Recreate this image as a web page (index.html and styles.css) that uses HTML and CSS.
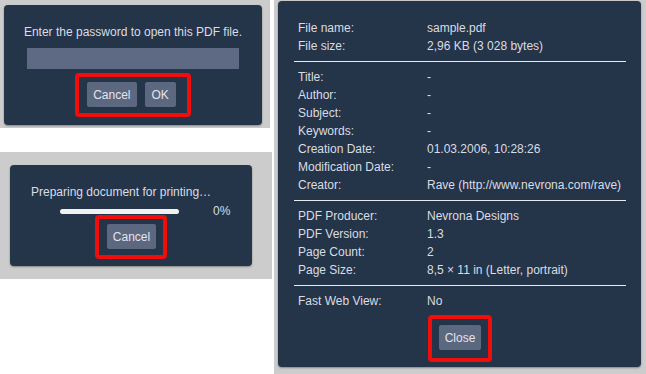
FILE: index.html
```html
<!DOCTYPE html>
<html lang="en">
<head>
  <meta charset="UTF-8" />
  <title>PDF dialogs</title>
  <meta name="viewport" content="width=device-width, initial-scale=1.0" />
  <link rel="stylesheet" href="styles.css">
</head>
<body>

  <div class="sheet">

    <!-- Left column: password + print dialogs -->
    <div class="left-col">

      <div class="backdrop password-backdrop">
        <div class="dialog password-dialog">
          <p class="dialog-text">Enter the password to open this PDF file.</p>
          <div class="password-input"></div>
          <div class="highlight password-buttons">
            <button>Cancel</button>
            <button>OK</button>
          </div>
        </div>
      </div>

      <div class="backdrop print-backdrop">
        <div class="dialog print-dialog">
          <p class="print-text">Preparing document for printing…</p>
          <div class="progress-row">
            <div class="progress-bar"></div>
            <span class="progress-value">0%</span>
          </div>
          <div class="highlight print-buttons">
            <button>Cancel</button>
          </div>
        </div>
      </div>

    </div>

    <!-- Right column: document properties -->
    <div class="backdrop props-backdrop">
      <div class="dialog props-dialog">

        <div class="props-section">
          <div class="row"><span class="label">File name:</span><span>sample.pdf</span></div>
          <div class="row"><span class="label">File size:</span><span>2,96 KB (3 028 bytes)</span></div>
        </div>
        <hr>
        <div class="props-section">
          <div class="row"><span class="label">Title:</span><span>-</span></div>
          <div class="row"><span class="label">Author:</span><span>-</span></div>
          <div class="row"><span class="label">Subject:</span><span>-</span></div>
          <div class="row"><span class="label">Keywords:</span><span>-</span></div>
          <div class="row"><span class="label">Creation Date:</span><span>01.03.2006, 10:28:26</span></div>
          <div class="row"><span class="label">Modification Date:</span><span>-</span></div>
          <div class="row"><span class="label">Creator:</span><span>Rave (http://www.nevrona.com/rave)</span></div>
        </div>
        <hr>
        <div class="props-section">
          <div class="row"><span class="label">PDF Producer:</span><span>Nevrona Designs</span></div>
          <div class="row"><span class="label">PDF Version:</span><span>1.3</span></div>
          <div class="row"><span class="label">Page Count:</span><span>2</span></div>
          <div class="row"><span class="label">Page Size:</span><span>8,5 × 11 in (Letter, portrait)</span></div>
        </div>
        <hr>
        <div class="props-section">
          <div class="row"><span class="label">Fast Web View:</span><span>No</span></div>
        </div>

        <div class="highlight close-buttons">
          <button>Close</button>
        </div>

      </div>
    </div>

  </div>

</body>
</html>
```

FILE: styles.css
```css
/* Basic reset */
* {
  box-sizing: border-box;
  margin: 0;
  padding: 0;
}
body {
  font-family: 'Liberation Sans', Arial, sans-serif;
  font-size: 12px;
  background: #fff;
  color: #d9dde4;
  width: 646px;
  height: 374px;
  overflow: hidden;
}

/* Page layout */
.sheet {
  display: flex;
  gap: 4px;
  height: 374px;
}
.left-col {
  width: 270px;
  display: flex;
  flex-direction: column;
  gap: 24px;
}

/* Gray area behind each dialog */
.backdrop {
  background: #cccccc;
}

/* Dark dialog box */
.dialog {
  background: #243449;
  border-radius: 4px;
  box-shadow: 0 1px 2px rgba(0,0,0,0.35);
}

/* Buttons */
button {
  font-family: inherit;
  font-size: 12px;
  color: #e2e5eb;
  background: #5c6780;
  border: none;
  border-radius: 2px;
  height: 25px;
  padding: 0 6px;
}

/* Red annotation frame around the buttons */
.highlight {
  display: flex;
  gap: 8px;
  border: 4px solid #f20d0d;
  border-radius: 4px;
  align-self: center;
}

/* Password dialog */
.password-backdrop {
  height: 128px;
  padding: 5px 8px 3px 4px;
}
.password-dialog {
  height: 120px;
  display: flex;
  flex-direction: column;
  align-items: center;
  padding-top: 20px;
}
.dialog-text {
  line-height: 14px;
}
.password-input {
  width: 212px;
  height: 21px;
  margin-top: 9px;
  background: #5e6a83;
}
.password-buttons {
  margin-top: 4px;
  padding: 5px 11px 6px 8px;
}
.password-buttons button:last-child {
  padding: 0 7px;
}

/* Print dialog */
.print-backdrop {
  width: 272px;
  height: 127px;
  padding: 13px 0 0 10px;
}
.print-dialog {
  width: 242px;
  height: 101px;
  display: flex;
  flex-direction: column;
  padding-top: 20px;
}
.print-text {
  line-height: 14px;
  padding-left: 21px;
}
.progress-row {
  display: flex;
  align-items: center;
  padding-left: 50px;
  height: 16px;
  margin-top: 4px;
}
.progress-bar {
  width: 119px;
  height: 5px;
  background: #f1f1f1;
  border-radius: 3px;
}
.progress-value {
  margin-left: 34px;
}
.print-buttons {
  margin-top: -4px;
  padding: 5px 7px 6px 8px;
}

/* Document properties dialog */
.props-backdrop {
  flex: 1;
  padding: 1px 5px 7px 4px;
}
.props-dialog {
  height: 366px;
  display: flex;
  flex-direction: column;
  padding: 18px 15px 0 16px;
}
.row {
  display: flex;
  height: 18px;
  line-height: 18px;
  padding-left: 4px;
}
.label {
  width: 129px;
  flex-shrink: 0;
}
hr {
  border: none;
  border-top: 1px solid #e8eaee;
  margin: 6px 0;
}
.close-buttons {
  margin-top: 5px;
  padding: 6px 7px 8px 7px;
}
```
